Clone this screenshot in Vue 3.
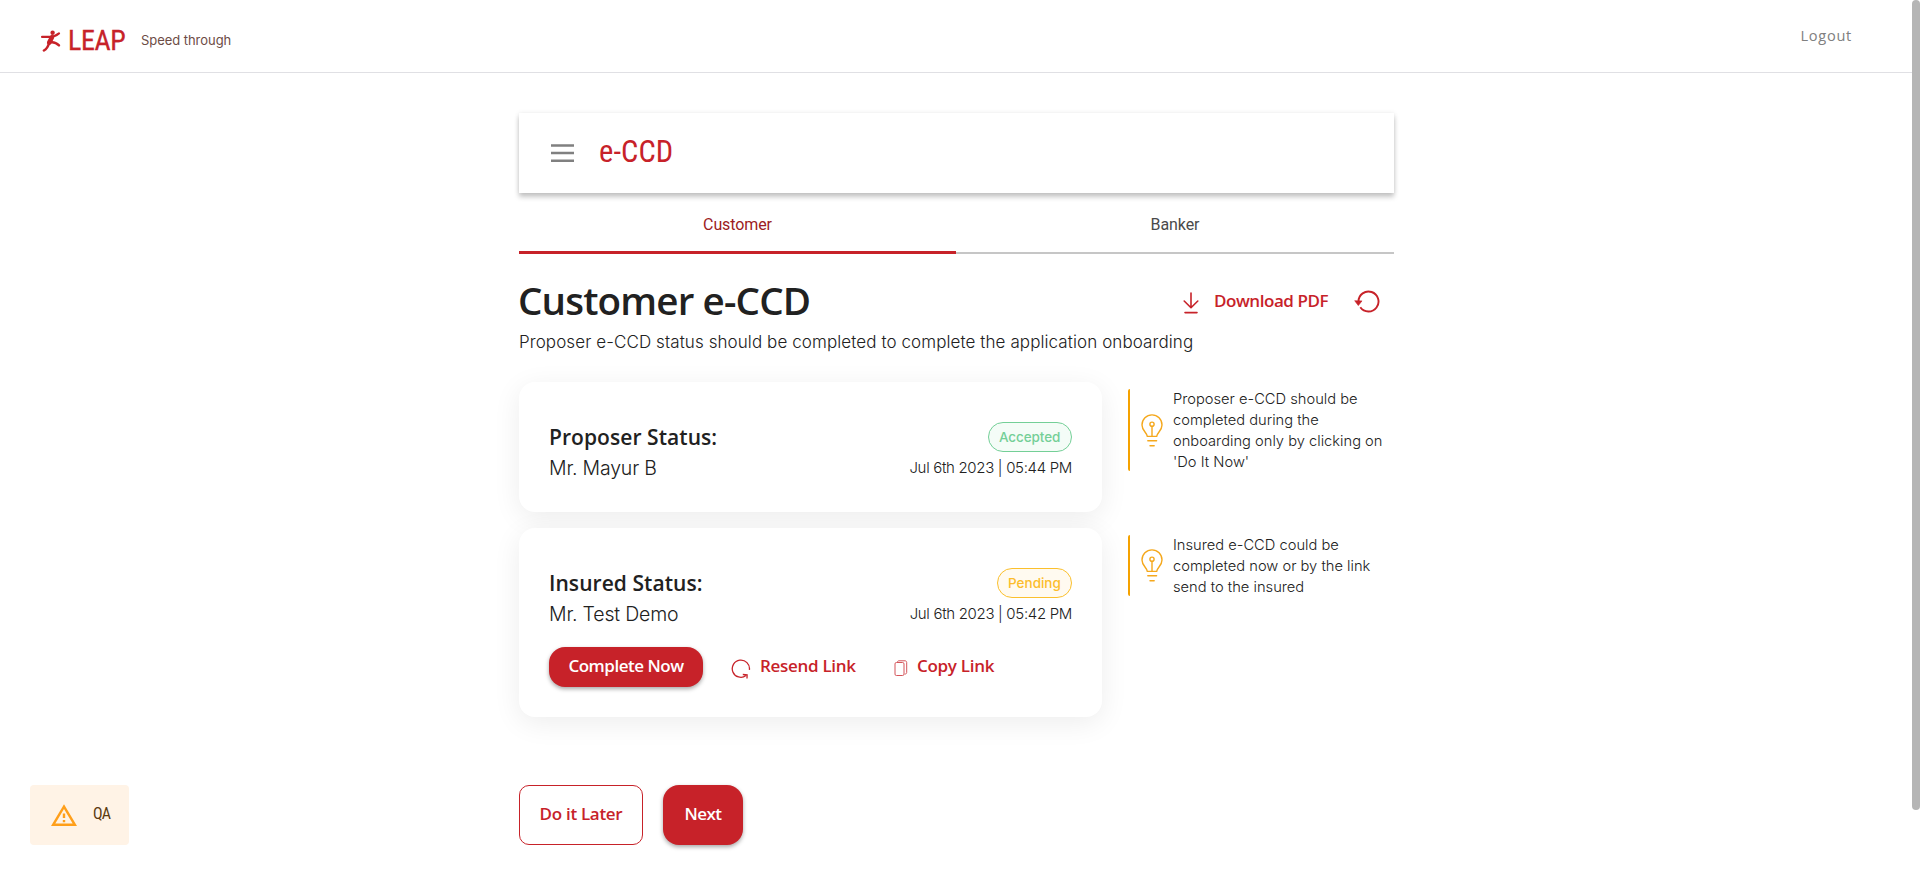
<script setup>
const tabs = [
  { label: 'Customer', active: true },
  { label: 'Banker', active: false },
]
const tips = [
  { key: 'one', lines: ['Proposer e-CCD should be', 'completed during the', 'onboarding only by clicking on', "'Do It Now'"] },
  { key: 'two', lines: ['Insured e-CCD could be', 'completed now or by the link', 'send to the insured'] },
]
</script>

<template>
  <div class="page">
    <header class="topbar">
      <div class="brand">
        <svg class="runner" width="20" height="22" viewBox="0 0 20 22" fill="none" stroke="#c72229" stroke-linecap="round" stroke-linejoin="round">
          <circle cx="11.600" cy="2.700" r="2.200" fill="#c72229" stroke="none" />
          <path d="M1 6.900h8.300c3.200 0 5.900-1.300 8.700-3.500" stroke-width="2.100" />
          <path d="M11 7.300 8.200 12.600" stroke-width="4.600" />
          <path d="M8 13.200c-.8 3-2.200 5.700-5.100 7.300" stroke-width="2.500" />
          <path d="M8.500 12.600c3.500-.9 7 .3 9.500 2.800" stroke-width="2.400" />
        </svg>
        <span class="leap">LEAP</span>
        <span class="slogan">Speed through</span>
      </div>
      <a class="logout">Logout</a>
    </header>

    <main class="content">
      <div class="appbar">
        <svg width="23" height="19" viewBox="0 0 23 19"><path d="M0 1.400h23M0 9.100h23M0 16.800h23" stroke="#808080" stroke-width="2.500" /></svg>
        <span class="apptitle">e-CCD</span>
      </div>

      <nav class="tabs">
        <div v-for="t in tabs" :key="t.label" class="tab" :class="{ active: t.active }">{{ t.label }}</div>
      </nav>

      <div class="heading">
        <h1>Customer e-CCD</h1>
        <div class="actions">
          <svg class="dl" width="16" height="22" viewBox="0 0 16 22" fill="none" stroke="#c72229" stroke-width="1.600" stroke-linecap="round" stroke-linejoin="round">
            <path d="M8 1v14.500M1.200 9 8 15.700 14.800 9M2 20.600h12" />
          </svg>
          <span class="link">Download PDF</span>
          <svg class="refresh" width="26" height="23" viewBox="0 0 26 23" fill="none" stroke="#c72229" stroke-width="1.900">
            <path d="M4.500 11.500A10 10 0 1 1 6.300 17.200" />
            <path d="M.7 10.700 8 10.900 4.300 15.600z" fill="#c72229" stroke-width=".6" />
          </svg>
        </div>
      </div>
      <p class="subtitle">Proposer e-CCD status should be completed to complete the application onboarding</p>

      <div class="board">
        <section class="card">
          <div class="row">
            <h2>Proposer Status:</h2>
            <span class="badge accepted">Accepted</span>
          </div>
          <div class="row detail">
            <span class="name">Mr. Mayur B</span>
            <span class="date">Jul 6th 2023 | 05:44 PM</span>
          </div>
        </section>

        <aside v-for="tip in tips" :key="tip.key" class="tip" :class="tip.key">
          <svg class="bulb" width="22" height="33" viewBox="0 0 22 33" fill="none" stroke="#f5a81c" stroke-width="1.400" stroke-linecap="round" stroke-linejoin="round">
            <path d="M6.300 22.400C5.900 18.500 1 16.600 1 10.900a10 10 0 0 1 20 0c0 5.700-4.900 7.600-5.300 11.500z" />
            <circle cx="11" cy="10.200" r="2.100" />
            <path d="M11 12.500v9.700M6.800 26.700h8.800M9 31.700h4.200" />
          </svg>
          <p><span v-for="l in tip.lines" :key="l">{{ l }}</span></p>
        </aside>

        <section class="card second">
          <div class="row">
            <h2>Insured Status:</h2>
            <span class="badge pending">Pending</span>
          </div>
          <div class="row detail">
            <span class="name">Mr. Test Demo</span>
            <span class="date">Jul 6th 2023 | 05:42 PM</span>
          </div>
          <div class="buttons">
            <button class="btn solid small">Complete Now</button>
            <svg class="resend" width="20" height="20" viewBox="0 0 20 20" fill="none" stroke="#c72229" stroke-width="1.300">
              <path d="M18.400 10.800A8.600 8.600 0 1 0 15 16.600M11.800 15.500l4.300.3-.1 3.600" />
            </svg>
            <span class="link resend-text">Resend Link</span>
            <svg class="copy" width="14" height="17" viewBox="0 0 14 17" fill="none" stroke="#d4555a" stroke-width="1">
              <rect x="1" y="2.500" width="9" height="13" rx="1.400" />
              <path d="M3.500 2.200C3.500 1.200 4 .8 5 .8h6c1 0 1.700.7 1.700 1.700v10c0 1-.7 1.600-2 1.600" />
            </svg>
            <span class="link copy-text">Copy Link</span>
          </div>
        </section>
      </div>

      <div class="footer">
        <button class="btn outline">Do it Later</button>
        <button class="btn solid next">Next</button>
      </div>
    </main>

    <div class="env">
      <svg width="26" height="23" viewBox="0 0 26 23" fill="none" stroke="#ff9f1a" stroke-width="2.400">
        <path d="M13 2.600 2.100 20.800h21.800z" />
        <path d="M13 9.400v4.600M13 16v2.300" />
      </svg>
      <span>QA</span>
    </div>
    <div class="scrollbar"></div>
  </div>
</template>

<style>
html, body { overflow: hidden; background: #fff; }
</style>

<style scoped>
.page {
  position: relative;
  width: 1912px;
  height: 875px;
  font-family: Inter, "Liberation Sans", sans-serif;
  color: #212121;
}
.page * { box-sizing: border-box; }
h1, h2, p { margin: 0; }

.topbar {
  display: flex;
  justify-content: space-between;
  align-items: flex-start;
  height: 73px;
  padding: 0 60px 0 41px;
  border-bottom: 1px solid #e0e0e4;
}
.brand { display: flex; align-items: flex-start; }
.runner { margin-top: 30px; }
.leap {
  width: 79px;
  padding-left: 7px;
  margin-top: 26px;
  font: 400 28px/30px Roboto, sans-serif;
  font-stretch: 75%;
  letter-spacing: -0.400px;
  color: #c72229;
  -webkit-text-stroke: 0.300px #c72229;
}
.slogan {
  margin: 30px 0 0 1px;
  font-size: 13px;
  line-height: 20px;
  letter-spacing: -0.050px;
  color: #6d4c45;
}
.logout {
  margin-top: 25px;
  font: 400 14.600px/20px "Open Sans", sans-serif;
  letter-spacing: 0.700px;
  color: #808080;
}

.content { width: 876px; margin: 40px auto 0; padding-left: 1px; }
.appbar {
  display: flex;
  align-items: center;
  height: 80px;
  padding-left: 32px;
  background: #fff;
  box-shadow: 0 4px 5px rgba(0, 0, 0, .22), 0 0 5px rgba(0, 0, 0, .08);
}
.apptitle {
  margin: -2px 0 0 25px;
  font: 400 30.500px/40px Roboto, sans-serif;
  font-stretch: 75%;
  letter-spacing: 0.100px;
  color: #c72229;
}
.tabs { display: grid; grid-template-columns: 437px 438px; height: 61px; }
.tab {
  padding-top: 20px;
  text-align: center;
  font: 400 16px/24px Roboto, sans-serif;
  letter-spacing: -0.100px;
  color: #4a4a4a;
  border-bottom: 2px solid #c6c6c6;
}
.tab.active { color: #9c1c22; border-bottom: 3px solid #c72229; }

.heading { display: flex; justify-content: space-between; align-items: center; margin-top: 22px; }
h1 {
  margin-left: -1px;
  padding-top: 1px;
  font: 600 38.600px/47px "Open Sans", sans-serif;
  letter-spacing: -0.850px;
}
.actions { display: flex; align-items: center; padding-right: 14px; }
.link, .btn {
  font: 600 17px/24px "Open Sans", sans-serif;
  letter-spacing: -0.300px;
  color: #c72229;
  white-space: nowrap;
}
.actions .link { width: 114px; margin: 1px 26px 0 15px; letter-spacing: -0.450px; }
.dl { margin-top: 6px; }
.refresh { margin-top: 3px; }
.subtitle {
  margin-top: 6px;
  font-size: 17px;
  font-weight: 300;
  line-height: 24px;
  letter-spacing: 0.090px;
}

.board {
  display: grid;
  grid-template-columns: 583px 266px;
  grid-template-rows: 130px 189px;
  gap: 16px 26px;
  margin-top: 28px;
}
.card {
  padding: 40px 30px 0;
  border-radius: 16px;
  background: #fff;
  box-shadow: 0 6px 28px rgba(0, 0, 0, .075);
}
.card.second { grid-row: 2; grid-column: 1; }
.row { display: flex; justify-content: space-between; line-height: 30px; }
.detail { padding-top: 1px; }
h2 {
  font: 600 21px/30px "Open Sans", sans-serif;
  letter-spacing: 0.060px;
}
.badge {
  height: 30px;
  padding: 0 0 0 10px;
  border: 1px solid;
  border-radius: 15px;
  font-size: 13.500px;
  font-weight: 500;
  line-height: 29px;
}
.accepted { width: 84px; color: #74cf97; background: #f4fcf7; letter-spacing: -0.100px; }
.pending { width: 75px; color: #fcbd2c; border-color: #fbc02d; background: #fffaf0; }
.name { font-size: 19.500px; font-weight: 300; letter-spacing: -0.180px; }
.date { font-size: 15px; font-weight: 300; letter-spacing: -0.320px; }

.buttons { display: flex; align-items: flex-start; margin-top: 18px; }
.btn { border: 0; padding: 0 0 3px; text-align: center; }
.solid {
  color: #fff;
  background: #c72229;
  border-radius: 16px;
  box-shadow: 0 2px 4px rgba(0, 0, 0, .35);
}
.small { width: 154px; height: 40px; letter-spacing: -0.480px; }
.resend { margin: 12px 0 0 28px; }
.resend-text { margin: 7px 0 0 9px; width: 97px; }
.copy { margin: 13px 0 0 37px; }
.copy-text { margin: 7px 0 0 9px; }

.tip {
  position: relative;
  display: flex;
  align-items: center;
  margin-top: 7px;
  padding-left: 13px;
}
.tip::before {
  content: "";
  position: absolute;
  left: 0;
  top: 0;
  bottom: 0;
  width: 2px;
  border-radius: 2px 0 0 2px;
  background: #f5a200;
}
.tip.one { height: 82px; grid-row: 1; grid-column: 2; }
.tip.two { height: 61px; grid-row: 2; grid-column: 2; }
.tip p {
  margin: 1px 0 0 10px;
  font-size: 14.700px;
  font-weight: 300;
  line-height: 21px;
}
.tip span { display: block; white-space: nowrap; }

.footer { display: flex; gap: 20px; margin-top: 68px; }
.footer .btn { height: 60px; }
.outline {
  width: 124px;
  background: #fff;
  border: 1px solid #c72229;
  border-radius: 10px;
}
.next { width: 80px; letter-spacing: -0.500px; }

.env {
  position: absolute;
  left: 30px;
  top: 785px;
  display: flex;
  align-items: center;
  width: 99px;
  height: 60px;
  padding-left: 21px;
  border-radius: 4px;
  background: #fff3e6;
}
.env span {
  margin: -2px 0 0 16px;
  font: 400 16px/24px Roboto, sans-serif;
  font-stretch: 75%;
  letter-spacing: -0.900px;
  color: #5c3a10;
}
.scrollbar {
  position: absolute;
  left: 1912px;
  top: 0;
  width: 8px;
  height: 810px;
  border-radius: 4px;
  background: #b5b5b5;
}
</style>
